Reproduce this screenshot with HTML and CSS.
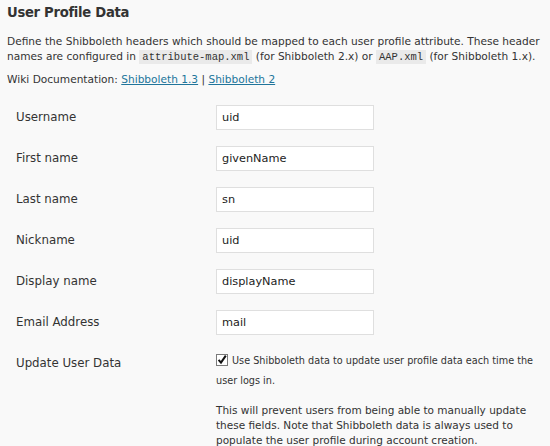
FILE: index.html
```html
<!DOCTYPE html>
<html>
<head>
<meta charset="utf-8">
<link rel="stylesheet" href="styles.css">
</head>
<body>
<div class="wrap">
  <h3 class="title">User Profile Data</h3>
  <p class="intro">Define the Shibboleth headers which should be mapped to each user profile attribute. These header<br>names are configured in <code>attribute-map.xml</code> (for Shibboleth 2.x) or <code>AAP.xml</code> (for Shibboleth 1.x).</p>
  <p class="wiki">Wiki Documentation: <a href="#">Shibboleth 1.3</a> | <a href="#">Shibboleth 2</a></p>
  <table class="form-table">
    <tr><th>Username</th><td><input class="field" type="text" value="uid"></td></tr>
    <tr><th>First name</th><td><input class="field" type="text" value="givenName"></td></tr>
    <tr><th>Last name</th><td><input class="field" type="text" value="sn"></td></tr>
    <tr><th>Nickname</th><td><input class="field" type="text" value="uid"></td></tr>
    <tr><th>Display name</th><td><input class="field" type="text" value="displayName"></td></tr>
    <tr><th>Email Address</th><td><input class="field" type="text" value="mail"></td></tr>
    <tr>
      <th>Update User Data</th>
      <td>
        <label class="check"><span class="box"><svg width="12" height="12" viewBox="0 0 12 12"><rect x="0.5" y="0.5" width="11" height="11" fill="#fff" stroke="#7a7a7a"/><path d="M2.6 5.8 L5 8.6 L9.8 1.6" fill="none" stroke="#111" stroke-width="2"/></svg></span>Use Shibboleth data to update user profile data each time the user logs in.</label>
        <p class="desc">This will prevent users from being able to manually update these fields. Note that Shibboleth data is always used to populate the user profile during account creation.</p>
      </td>
    </tr>
  </table>
</div>
</body>
</html>
```

FILE: styles.css
```css
html, body {
  margin: 0;
  padding: 0;
  background: #f9f9f9;
}
body {
  font-family: "DejaVu Sans", "Lucida Grande", Verdana, sans-serif;
  font-size: 10.6px;
  color: #333;
}
.wrap {
  padding: 3px 7px 0 7px;
}
.title {
  margin: 0;
  font-size: 13.2px;
  letter-spacing: -0.3px;
  font-weight: bold;
  line-height: 20px;
  color: #333;
}
.intro {
  margin: 11px 0 0 0;
  line-height: 15px;
}
code {
  font-family: "Liberation Mono", "DejaVu Sans Mono", monospace;
  font-size: 10.5px;
  background: #eaeaea;
  padding: 1px 3px;
}
.wiki {
  margin: 7px 0 0 0;
  line-height: 15px;
}
.wiki a {
  color: #21759b;
  text-decoration: underline;
}
.form-table {
  border-collapse: collapse;
  margin-top: 10px;
  margin-left: -1px;
}
.form-table th {
  width: 190px;
  padding: 8px 10px 8px 10px;
  text-align: left;
  font-weight: normal;
  vertical-align: top;
  line-height: 25px;
  font-size: 11.8px;
}
.form-table td {
  padding: 8px 0 7.7px 0;
  vertical-align: top;
}
.field {
  display: block;
  box-sizing: border-box;
  width: 158px;
  height: 25px;
  margin: 0;
  border: 1px solid #dfdfdf;
  background: #fff;
  padding: 0 5px;
  font-family: "DejaVu Sans", "Lucida Grande", Verdana, sans-serif;
  font-size: 11.3px;
  color: #222;
  outline: none;
}
.check {
  display: block;
  width: 322px;
  font-size: 9.7px;
  line-height: 20px;
  padding-top: 0;
}
.box {
  display: inline-block;
  vertical-align: -2px;
  margin-right: 4px;
}
.box svg {
  display: block;
}
.desc {
  margin: 12px 0 0 0;
  width: 325px;
  line-height: 15px;
  font-size: 10.5px;
}
```
